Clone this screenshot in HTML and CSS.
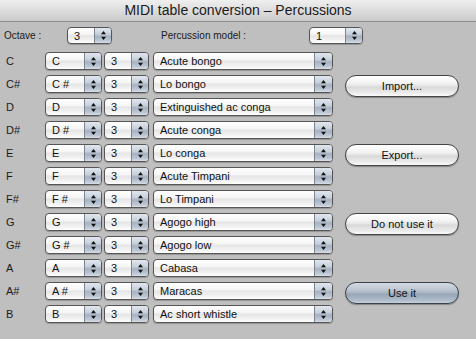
FILE: index.html
```html
<!DOCTYPE html>
<html>
<head>
<meta charset="utf-8">
<link rel="stylesheet" href="styles.css">
</head>
<body>
<div class="window">
  <header class="titlebar">MIDI table conversion – Percussions</header>
  <div class="content">
    <div class="toprow">
      <span class="lbl octave-lbl">Octave :</span>
      <div class="popup w-oct"><span class="val">3</span><span class="arr"><svg width="7" height="11" viewBox="0 0 7 11"><path d="M3.5 1 L6 4.2 L1 4.2 Z M3.5 10 L6 6.8 L1 6.8 Z" fill="#111"/></svg></span></div>
      <span class="lbl model-lbl">Percussion model :</span>
      <div class="popup w-model"><span class="val">1</span><span class="arr"><svg width="7" height="11" viewBox="0 0 7 11"><path d="M3.5 1 L6 4.2 L1 4.2 Z M3.5 10 L6 6.8 L1 6.8 Z" fill="#111"/></svg></span></div>
    </div>
    <div class="main">
      <div class="rows">
        <div class="row"><span class="note">C</span><div class="popup p-note"><span class="val">C</span><span class="arr"><svg width="7" height="11" viewBox="0 0 7 11"><path d="M3.5 1 L6 4.2 L1 4.2 Z M3.5 10 L6 6.8 L1 6.8 Z" fill="#111"/></svg></span></div><div class="popup p-oct"><span class="val">3</span><span class="arr"><svg width="7" height="11" viewBox="0 0 7 11"><path d="M3.5 1 L6 4.2 L1 4.2 Z M3.5 10 L6 6.8 L1 6.8 Z" fill="#111"/></svg></span></div><div class="popup p-name"><span class="val">Acute bongo</span><span class="arr"><svg width="7" height="11" viewBox="0 0 7 11"><path d="M3.5 1 L6 4.2 L1 4.2 Z M3.5 10 L6 6.8 L1 6.8 Z" fill="#111"/></svg></span></div></div>
        <div class="row"><span class="note">C#</span><div class="popup p-note"><span class="val">C #</span><span class="arr"><svg width="7" height="11" viewBox="0 0 7 11"><path d="M3.5 1 L6 4.2 L1 4.2 Z M3.5 10 L6 6.8 L1 6.8 Z" fill="#111"/></svg></span></div><div class="popup p-oct"><span class="val">3</span><span class="arr"><svg width="7" height="11" viewBox="0 0 7 11"><path d="M3.5 1 L6 4.2 L1 4.2 Z M3.5 10 L6 6.8 L1 6.8 Z" fill="#111"/></svg></span></div><div class="popup p-name"><span class="val">Lo bongo</span><span class="arr"><svg width="7" height="11" viewBox="0 0 7 11"><path d="M3.5 1 L6 4.2 L1 4.2 Z M3.5 10 L6 6.8 L1 6.8 Z" fill="#111"/></svg></span></div></div>
        <div class="row"><span class="note">D</span><div class="popup p-note"><span class="val">D</span><span class="arr"><svg width="7" height="11" viewBox="0 0 7 11"><path d="M3.5 1 L6 4.2 L1 4.2 Z M3.5 10 L6 6.8 L1 6.8 Z" fill="#111"/></svg></span></div><div class="popup p-oct"><span class="val">3</span><span class="arr"><svg width="7" height="11" viewBox="0 0 7 11"><path d="M3.5 1 L6 4.2 L1 4.2 Z M3.5 10 L6 6.8 L1 6.8 Z" fill="#111"/></svg></span></div><div class="popup p-name"><span class="val">Extinguished ac conga</span><span class="arr"><svg width="7" height="11" viewBox="0 0 7 11"><path d="M3.5 1 L6 4.2 L1 4.2 Z M3.5 10 L6 6.8 L1 6.8 Z" fill="#111"/></svg></span></div></div>
        <div class="row"><span class="note">D#</span><div class="popup p-note"><span class="val">D #</span><span class="arr"><svg width="7" height="11" viewBox="0 0 7 11"><path d="M3.5 1 L6 4.2 L1 4.2 Z M3.5 10 L6 6.8 L1 6.8 Z" fill="#111"/></svg></span></div><div class="popup p-oct"><span class="val">3</span><span class="arr"><svg width="7" height="11" viewBox="0 0 7 11"><path d="M3.5 1 L6 4.2 L1 4.2 Z M3.5 10 L6 6.8 L1 6.8 Z" fill="#111"/></svg></span></div><div class="popup p-name"><span class="val">Acute conga</span><span class="arr"><svg width="7" height="11" viewBox="0 0 7 11"><path d="M3.5 1 L6 4.2 L1 4.2 Z M3.5 10 L6 6.8 L1 6.8 Z" fill="#111"/></svg></span></div></div>
        <div class="row"><span class="note">E</span><div class="popup p-note"><span class="val">E</span><span class="arr"><svg width="7" height="11" viewBox="0 0 7 11"><path d="M3.5 1 L6 4.2 L1 4.2 Z M3.5 10 L6 6.8 L1 6.8 Z" fill="#111"/></svg></span></div><div class="popup p-oct"><span class="val">3</span><span class="arr"><svg width="7" height="11" viewBox="0 0 7 11"><path d="M3.5 1 L6 4.2 L1 4.2 Z M3.5 10 L6 6.8 L1 6.8 Z" fill="#111"/></svg></span></div><div class="popup p-name"><span class="val">Lo conga</span><span class="arr"><svg width="7" height="11" viewBox="0 0 7 11"><path d="M3.5 1 L6 4.2 L1 4.2 Z M3.5 10 L6 6.8 L1 6.8 Z" fill="#111"/></svg></span></div></div>
        <div class="row"><span class="note">F</span><div class="popup p-note"><span class="val">F</span><span class="arr"><svg width="7" height="11" viewBox="0 0 7 11"><path d="M3.5 1 L6 4.2 L1 4.2 Z M3.5 10 L6 6.8 L1 6.8 Z" fill="#111"/></svg></span></div><div class="popup p-oct"><span class="val">3</span><span class="arr"><svg width="7" height="11" viewBox="0 0 7 11"><path d="M3.5 1 L6 4.2 L1 4.2 Z M3.5 10 L6 6.8 L1 6.8 Z" fill="#111"/></svg></span></div><div class="popup p-name"><span class="val">Acute Timpani</span><span class="arr"><svg width="7" height="11" viewBox="0 0 7 11"><path d="M3.5 1 L6 4.2 L1 4.2 Z M3.5 10 L6 6.8 L1 6.8 Z" fill="#111"/></svg></span></div></div>
        <div class="row"><span class="note">F#</span><div class="popup p-note"><span class="val">F #</span><span class="arr"><svg width="7" height="11" viewBox="0 0 7 11"><path d="M3.5 1 L6 4.2 L1 4.2 Z M3.5 10 L6 6.8 L1 6.8 Z" fill="#111"/></svg></span></div><div class="popup p-oct"><span class="val">3</span><span class="arr"><svg width="7" height="11" viewBox="0 0 7 11"><path d="M3.5 1 L6 4.2 L1 4.2 Z M3.5 10 L6 6.8 L1 6.8 Z" fill="#111"/></svg></span></div><div class="popup p-name"><span class="val">Lo Timpani</span><span class="arr"><svg width="7" height="11" viewBox="0 0 7 11"><path d="M3.5 1 L6 4.2 L1 4.2 Z M3.5 10 L6 6.8 L1 6.8 Z" fill="#111"/></svg></span></div></div>
        <div class="row"><span class="note">G</span><div class="popup p-note"><span class="val">G</span><span class="arr"><svg width="7" height="11" viewBox="0 0 7 11"><path d="M3.5 1 L6 4.2 L1 4.2 Z M3.5 10 L6 6.8 L1 6.8 Z" fill="#111"/></svg></span></div><div class="popup p-oct"><span class="val">3</span><span class="arr"><svg width="7" height="11" viewBox="0 0 7 11"><path d="M3.5 1 L6 4.2 L1 4.2 Z M3.5 10 L6 6.8 L1 6.8 Z" fill="#111"/></svg></span></div><div class="popup p-name"><span class="val">Agogo high</span><span class="arr"><svg width="7" height="11" viewBox="0 0 7 11"><path d="M3.5 1 L6 4.2 L1 4.2 Z M3.5 10 L6 6.8 L1 6.8 Z" fill="#111"/></svg></span></div></div>
        <div class="row"><span class="note">G#</span><div class="popup p-note"><span class="val">G #</span><span class="arr"><svg width="7" height="11" viewBox="0 0 7 11"><path d="M3.5 1 L6 4.2 L1 4.2 Z M3.5 10 L6 6.8 L1 6.8 Z" fill="#111"/></svg></span></div><div class="popup p-oct"><span class="val">3</span><span class="arr"><svg width="7" height="11" viewBox="0 0 7 11"><path d="M3.5 1 L6 4.2 L1 4.2 Z M3.5 10 L6 6.8 L1 6.8 Z" fill="#111"/></svg></span></div><div class="popup p-name"><span class="val">Agogo low</span><span class="arr"><svg width="7" height="11" viewBox="0 0 7 11"><path d="M3.5 1 L6 4.2 L1 4.2 Z M3.5 10 L6 6.8 L1 6.8 Z" fill="#111"/></svg></span></div></div>
        <div class="row"><span class="note">A</span><div class="popup p-note"><span class="val">A</span><span class="arr"><svg width="7" height="11" viewBox="0 0 7 11"><path d="M3.5 1 L6 4.2 L1 4.2 Z M3.5 10 L6 6.8 L1 6.8 Z" fill="#111"/></svg></span></div><div class="popup p-oct"><span class="val">3</span><span class="arr"><svg width="7" height="11" viewBox="0 0 7 11"><path d="M3.5 1 L6 4.2 L1 4.2 Z M3.5 10 L6 6.8 L1 6.8 Z" fill="#111"/></svg></span></div><div class="popup p-name"><span class="val">Cabasa</span><span class="arr"><svg width="7" height="11" viewBox="0 0 7 11"><path d="M3.5 1 L6 4.2 L1 4.2 Z M3.5 10 L6 6.8 L1 6.8 Z" fill="#111"/></svg></span></div></div>
        <div class="row"><span class="note">A#</span><div class="popup p-note"><span class="val">A #</span><span class="arr"><svg width="7" height="11" viewBox="0 0 7 11"><path d="M3.5 1 L6 4.2 L1 4.2 Z M3.5 10 L6 6.8 L1 6.8 Z" fill="#111"/></svg></span></div><div class="popup p-oct"><span class="val">3</span><span class="arr"><svg width="7" height="11" viewBox="0 0 7 11"><path d="M3.5 1 L6 4.2 L1 4.2 Z M3.5 10 L6 6.8 L1 6.8 Z" fill="#111"/></svg></span></div><div class="popup p-name"><span class="val">Maracas</span><span class="arr"><svg width="7" height="11" viewBox="0 0 7 11"><path d="M3.5 1 L6 4.2 L1 4.2 Z M3.5 10 L6 6.8 L1 6.8 Z" fill="#111"/></svg></span></div></div>
        <div class="row"><span class="note">B</span><div class="popup p-note"><span class="val">B</span><span class="arr"><svg width="7" height="11" viewBox="0 0 7 11"><path d="M3.5 1 L6 4.2 L1 4.2 Z M3.5 10 L6 6.8 L1 6.8 Z" fill="#111"/></svg></span></div><div class="popup p-oct"><span class="val">3</span><span class="arr"><svg width="7" height="11" viewBox="0 0 7 11"><path d="M3.5 1 L6 4.2 L1 4.2 Z M3.5 10 L6 6.8 L1 6.8 Z" fill="#111"/></svg></span></div><div class="popup p-name"><span class="val">Ac short whistle</span><span class="arr"><svg width="7" height="11" viewBox="0 0 7 11"><path d="M3.5 1 L6 4.2 L1 4.2 Z M3.5 10 L6 6.8 L1 6.8 Z" fill="#111"/></svg></span></div></div>
      </div>
      <div class="buttons">
        <button class="btn">Import...</button>
        <button class="btn">Export...</button>
        <button class="btn">Do not use it</button>
        <button class="btn btn-default">Use it</button>
      </div>
    </div>
  </div>
</div>
</body>
</html>
```
FILE: styles.css
```css
html, body {
  margin: 0;
  padding: 0;
  background: #bebebe;
}
body {
  font-family: "Liberation Sans", Arial, sans-serif;
  font-size: 11px;
  color: #111;
}
.window {
  width: 476px;
  height: 339px;
  background: #bfbfbf;
  overflow: hidden;
}
.titlebar {
  height: 21px;
  border-bottom: 1px solid #8a8a8a;
  background: linear-gradient(#efefef, #dddddd 50%, #cbcbcb);
  text-align: center;
  font-size: 14px;
  line-height: 21px;
  color: #1a1a1a;
}
.content {
  padding-top: 5px;
}
.toprow {
  display: flex;
  align-items: center;
  height: 17px;
}
.lbl {
  font-size: 10px;
  color: #1a1a1a;
}
.octave-lbl {
  width: 63px;
  padding-left: 4px;
}
.model-lbl {
  width: 148px;
  margin-left: 49px;
}
.w-oct { width: 45px; }
.w-model { width: 54px; }

.popup {
  box-sizing: border-box;
  display: flex;
  height: 18px;
  border: 1px solid #555;
  border-radius: 4px;
  background: linear-gradient(#ffffff, #f6f6f6 40%, #e6e6e6 52%, #f2f2f2 80%, #ffffff);
  box-shadow: 0 1px 1px rgba(0, 0, 0, 0.22);
  overflow: hidden;
}
.toprow .popup { height: 17px; }
.popup .val {
  flex: 1;
  padding-left: 6px;
  line-height: 16px;
  white-space: nowrap;
  overflow: hidden;
  color: #111;
}
.popup .arr {
  width: 16px;
  flex: none;
  border-left: 1px solid #7c8592;
  background: linear-gradient(#e2e7ee, #c6cfda 42%, #a6b2c2 55%, #bec8d5 85%, #d9dfe7);
  display: flex;
  align-items: center;
  justify-content: center;
}
.main {
  display: flex;
  margin-top: 8px;
}
.rows {
  display: flex;
  flex-direction: column;
  gap: 5px;
}
.row {
  display: flex;
  align-items: center;
  height: 18px;
}
.note {
  width: 39px;
  padding-left: 6px;
  font-size: 11px;
  color: #1a1a1a;
}
.p-note { width: 57px; }
.p-oct { width: 45px; margin-left: 2px; }
.p-name { width: 180px; margin-left: 4px; }
.p-name .arr { width: 17px; }

.buttons {
  display: flex;
  flex-direction: column;
  gap: 47px;
  padding-top: 23px;
  margin-left: 12px;
}
.btn {
  box-sizing: border-box;
  width: 114px;
  height: 22px;
  padding: 0;
  border: 1px solid #444;
  border-radius: 11px;
  background: linear-gradient(#ffffff, #f3f3f3 35%, #e4e4e4 50%, #d9d9d9 55%, #ececec 85%, #fafafa);
  box-shadow: 0 1px 1px rgba(0, 0, 0, 0.3);
  font-family: "Liberation Sans", Arial, sans-serif;
  font-size: 11px;
  color: #111;
  line-height: 20px;
}
.btn-default {
  border-color: #3a424c;
  background: linear-gradient(#d3d9e1, #bcc6d2 35%, #a7b3c2 50%, #97a5b7 56%, #aebbcb 85%, #c4cfdb);
}
```
